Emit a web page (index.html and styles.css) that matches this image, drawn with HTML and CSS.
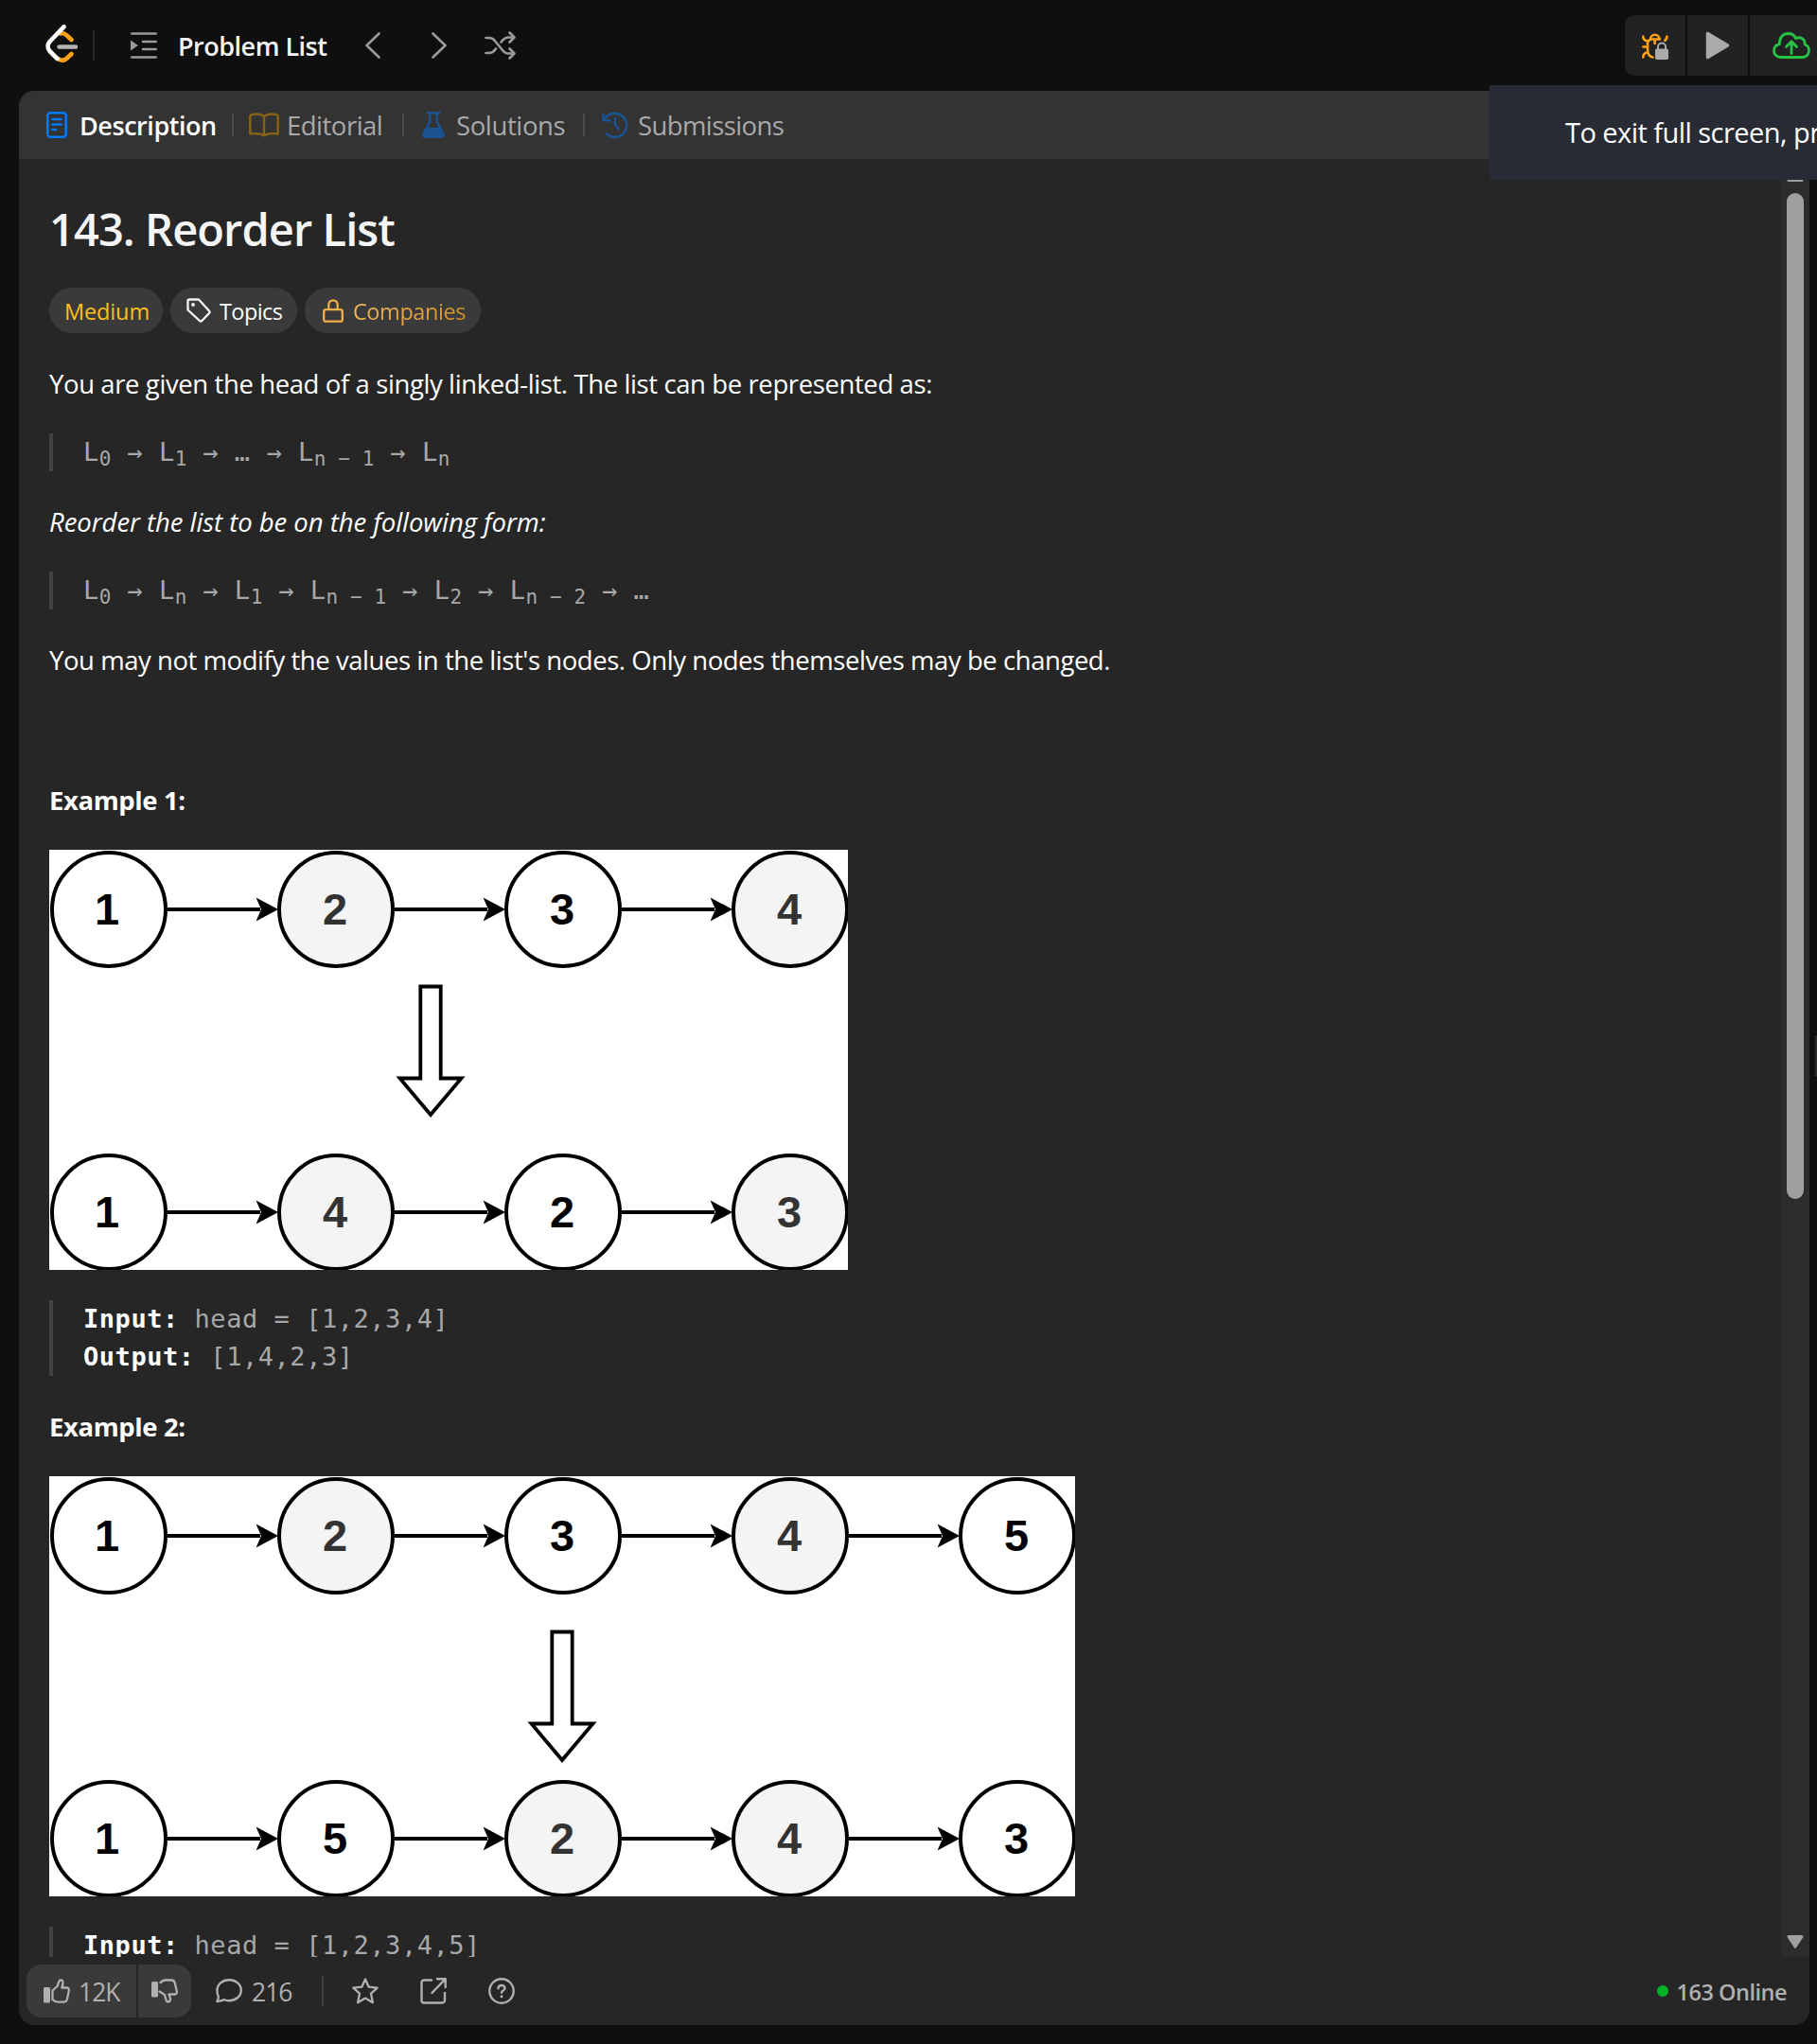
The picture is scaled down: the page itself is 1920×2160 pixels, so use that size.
FILE: index.html
```html
<!DOCTYPE html>
<html lang="en">
<head>
<meta charset="utf-8">
<title>143. Reorder List</title>
<link rel="stylesheet" href="styles.css">
</head>
<body>
<svg class="defs" width="0" height="0">
  <defs>
    <g id="link"><path d="M0 0H98" stroke="#000" stroke-width="4"/><path d="M117 0L93.500 -12.500L99 0L93.500 12.500Z" fill="#000"/></g>
    <path id="down" d="M-10.700 0H10.700V97H32.500L0 135.500L-32.500 97H-10.700Z" fill="#fff" stroke="#000" stroke-width="3.800"/>
  </defs>
</svg>
<header class="topbar">
  <svg class="logo" width="34" height="40" viewBox="0 0 34 40" fill="none" stroke-width="4.600" stroke-linecap="round" stroke-linejoin="round"><path d="M16 9.500c3-.8 5 .3 6.500 1.800l5 4.700M14 36.300c3 2 6 1.700 8.500-.6l5-4.700" stroke="#ffa116"/><path d="M14.500 23.500H32" stroke="#b3b3b3"/><path d="M19.500 2.300L4.500 18c-2.500 3-2.500 7 0 10l8 8" stroke="#fff"/></svg>
  <span class="rule"></span>
  <svg class="list-icon" width="28" height="28" viewBox="0 0 28 28" fill="none" stroke="#9a9a9a" stroke-width="2.600" stroke-linecap="round"><path d="M1.300 1.500H26.700M13 10H26.700M13 18H26.700M1.300 26.500H26.700"/><path d="M0 8.500v11L8 14z" fill="#9a9a9a" stroke="none"/></svg>
  <span class="list-label"><b class="label t-list">Problem List</b></span>
  <svg class="prev" width="16" height="28" viewBox="0 0 16 28" fill="none" stroke="#9a9a9a" stroke-width="2.600" stroke-linecap="round" stroke-linejoin="round"><path d="M14.500 1.500L1.500 14l13 12.500"/></svg>
  <svg class="next" width="16" height="28" viewBox="0 0 16 28" fill="none" stroke="#9a9a9a" stroke-width="2.600" stroke-linecap="round" stroke-linejoin="round"><path d="M1.500 1.500L14.500 14l-13 12.500"/></svg>
  <svg class="shuffle" width="33" height="30" viewBox="0 0 33 30" fill="none" stroke="#9a9a9a" stroke-width="2.600" stroke-linecap="round" stroke-linejoin="round"><path d="M1.500 7H5c3 0 4.500 1 6.200 3.500L19 20c2 2.500 3.500 3.500 6 3.500h6M1.500 23H5c3 0 4.500-1 6.200-3.500l.8-1M17.500 11.500l1.500-1.800C21 7.500 22.500 6.500 25 6.500h6M26.500 1.500l5 5-5 5M26.500 18.500l5 5-5 5"/></svg>
  <div class="actions">
    <span class="action"><svg width="28" height="29" viewBox="0 0 28 29" fill="none"><g stroke="#ffa116" stroke-width="2.600" stroke-linecap="round" stroke-linejoin="round"><path d="M9 7.500a4.700 4.700 0 0 1 9.400 0zM1.300 4.500c0 3 2 4.500 5 5M26.500 4.500c0 2-.6 3.200-2.300 4.300M1.300 15.500H6M1.300 26.500c0-3.500 1.500-4.800 5-5.500M6 12v6c0 5 2 8 5.500 8.500M13.600 8v4M6 11c1-2.500 2-3.500 4-3.500h9"/></g><path d="M17 18v-2.500a4 4 0 0 1 8 0V18" stroke="#aaa" stroke-width="2"/><rect x="14" y="17.500" width="14" height="11.500" rx="1.800" fill="#aaa"/></svg></span>
    <span class="action"><svg width="26" height="30" viewBox="0 0 26 30"><path d="M2.500 2.500v25L23.500 15z" fill="#aaa" stroke="#aaa" stroke-width="3.500" stroke-linejoin="round"/></svg></span>
    <span class="action submit"><svg width="40" height="28" viewBox="0 0 40 28" fill="none" stroke="#28c244" stroke-width="2.800" stroke-linecap="round" stroke-linejoin="round"><path d="M8.500 26.500C4 26.500 1.500 23 1.500 19.500c0-3.500 2.300-6 5.800-6.800C7.300 5.500 11 1.500 16.500 1.500c4 0 6.800 2 8 5C30 4.300 34.700 7.500 34.200 13c2.800 1 4.300 3.500 4.300 6.300 0 4-3 7.200-7.200 7.200zM20 22.500V10M14.500 15.500L20 9.800l5.500 5.700"/></svg></span>
  </div>
</header>

<main class="panel">
  <nav class="tabs">
    <div class="tab tab-desc active"><svg width="22" height="28" viewBox="0 0 22 28" fill="none" stroke="#007aff" stroke-width="2.600" stroke-linecap="round"><rect x="1.300" y="1.300" width="19.400" height="25.400" rx="3"/><path d="M6.500 8H15.500M6.500 13.500H15.500M6.500 19H10"/></svg><b class="label t-desc">Description</b></div>
    <div class="tab tab-edit"><svg width="32" height="26" viewBox="0 0 32 26" fill="none" stroke="#876414" stroke-width="2.400" stroke-linejoin="round"><path d="M16 4C13 1.500 7 1.300 3 2.200c-1 .2-1.700.8-1.700 2V22.500c5-.6 11-.6 14.700 1.800 3.700-2.400 9.700-2.400 14.700-1.800V4.200c0-1.200-.7-1.800-1.700-2C25 1.300 19 1.500 16 4zM16 4v20"/></svg><span class="label t-edit">Editorial</span></div>
    <div class="tab tab-sol"><svg width="24" height="28" viewBox="0 0 24 28"><path d="M6 0h12a1 1 0 0 1 0 2.500h-1V10l6.500 13c1 2.500 0 5-3 5h-17c-3 0-4-2.500-3-5L7 10V2.500H6A1 1 0 0 1 6 0zM9.500 2.500v8.200L6.500 17h11l-3-6.300V2.500z" fill="#1b5290" fill-rule="evenodd"/></svg><span class="label t-sol">Solutions</span></div>
    <div class="tab tab-sub"><svg width="28" height="28" viewBox="0 0 28 28" fill="none" stroke="#1b5290" stroke-width="2.600" stroke-linecap="round" stroke-linejoin="round"><path d="M1.500 2.500v6.800h6.800M2.200 9A12.600 12.600 0 1 1 5 23.500M14 7.500V14l4 4.500"/></svg><span class="label t-sub">Submissions</span></div>
  </nav>

  <div class="scroller">
    <article class="content">
      <h1>143. Reorder List</h1>
      <div class="chips">
        <span class="chip medium"><span class="label">Medium</span></span>
        <span class="chip topics"><svg width="26" height="26" viewBox="0 0 26 26" fill="none" stroke="#f5f5f5" stroke-width="2.300" stroke-linejoin="round"><path d="M1.500 3v9.500L14 24c.8.700 1.500.700 2.300 0L24 16c.8-.8.800-1.600 0-2.400L13 1.500H3C2 1.500 1.500 2 1.500 3z"/><circle cx="7" cy="7" r="1.900" fill="#f5f5f5" stroke="none"/></svg><span class="label">Topics</span></span>
        <span class="chip companies"><svg width="22" height="25" viewBox="0 0 22 25" fill="none" stroke="#efb04a" stroke-width="2.300" stroke-linejoin="round"><rect x="1.200" y="11.200" width="19.600" height="12.500" rx="2"/><path d="M6.300 11V6a4.700 4.700 0 0 1 9.400 0v5"/></svg><span class="label">Companies</span></span>
      </div>
      <p class="intro">You are given the head of a singly linked-list. The list can be represented as:</p>
      <pre>L<sub>0</sub> → L<sub>1</sub> → … → L<sub>n − 1</sub> → L<sub>n</sub></pre>
      <p><em>Reorder the list to be on the following form:</em></p>
      <pre>L<sub>0</sub> → L<sub>n</sub> → L<sub>1</sub> → L<sub>n − 1</sub> → L<sub>2</sub> → L<sub>n − 2</sub> → …</pre>
      <p class="note">You may not modify the values in the list's nodes. Only nodes themselves may be changed.</p>
      <p class="blank">&nbsp;</p>
      <p><strong>Example 1:</strong></p>
      <svg class="figure" width="844" height="444" viewBox="0 0 844 444">
        <rect width="844" height="444" fill="#fff"/>
        <g class="node"><circle cx="63" cy="63" r="60"/><circle class="alt" cx="303" cy="63" r="60"/><circle cx="543" cy="63" r="60"/><circle class="alt" cx="783" cy="63" r="60"/><circle cx="63" cy="383" r="60"/><circle class="alt" cx="303" cy="383" r="60"/><circle cx="543" cy="383" r="60"/><circle class="alt" cx="783" cy="383" r="60"/></g>
        <use href="#link" x="125" y="63"/><use href="#link" x="365" y="63"/><use href="#link" x="605" y="63"/>
        <use href="#link" x="125" y="383"/><use href="#link" x="365" y="383"/><use href="#link" x="605" y="383"/>
        <use href="#down" x="403" y="144.500"/>
        <g class="num"><text x="61" y="79">1</text><text class="soft" x="302" y="79">2</text><text x="542" y="79">3</text><text class="soft" x="782" y="79">4</text><text x="61" y="399">1</text><text class="soft" x="302" y="399">4</text><text x="542" y="399">2</text><text class="soft" x="782" y="399">3</text></g>
      </svg>
      <pre><b>Input:</b> head = [1,2,3,4]
<b>Output:</b> [1,4,2,3]</pre>
      <p><strong>Example 2:</strong></p>
      <svg class="figure" width="1084" height="444" viewBox="0 0 1084 444">
        <rect width="1084" height="444" fill="#fff"/>
        <g class="node"><circle cx="63" cy="63" r="60"/><circle class="alt" cx="303" cy="63" r="60"/><circle cx="543" cy="63" r="60"/><circle class="alt" cx="783" cy="63" r="60"/><circle cx="1023" cy="63" r="60"/><circle cx="63" cy="383" r="60"/><circle cx="303" cy="383" r="60"/><circle class="alt" cx="543" cy="383" r="60"/><circle class="alt" cx="783" cy="383" r="60"/><circle cx="1023" cy="383" r="60"/></g>
        <use href="#link" x="125" y="63"/><use href="#link" x="365" y="63"/><use href="#link" x="605" y="63"/><use href="#link" x="845" y="63"/>
        <use href="#link" x="125" y="383"/><use href="#link" x="365" y="383"/><use href="#link" x="605" y="383"/><use href="#link" x="845" y="383"/>
        <use href="#down" x="542" y="164.500"/>
        <g class="num"><text x="61" y="79">1</text><text class="soft" x="302" y="79">2</text><text x="542" y="79">3</text><text class="soft" x="782" y="79">4</text><text x="1022" y="79">5</text><text x="61" y="399">1</text><text x="302" y="399">5</text><text class="soft" x="542" y="399">2</text><text class="soft" x="782" y="399">4</text><text x="1022" y="399">3</text></g>
      </svg>
      <pre><b>Input:</b> head = [1,2,3,4,5]</pre>
    </article>
    <div class="scrollbar">
      <svg width="18" height="14" viewBox="0 0 18 14"><path d="M2 12.500L9 2l7 10.500z" fill="#9f9f9f" stroke="#9f9f9f" stroke-width="3" stroke-linejoin="round"/></svg>
      <span class="thumb"></span>
      <svg width="18" height="14" viewBox="0 0 18 14"><path d="M2 1.500h14L9 12.300z" fill="#9f9f9f" stroke="#9f9f9f" stroke-width="3" stroke-linejoin="round"/></svg>
    </div>
  </div>

  <footer class="footer">
    <div class="votes">
      <span class="vote up"><svg width="28" height="26" viewBox="0 0 28 26"><rect x="0" y="9" width="7" height="16.500" rx="1.500" fill="#b0b0b0"/><path d="M9.500 12.500l5-4.500 2-5.500c1-2 4-1.300 4 1.500 0 2.300-.8 4-1.200 5.500h5.200c2 0 2.800 1.700 2.300 3.500l-2 9c-.5 1.800-1.500 2.700-3.500 2.700h-6c-2.600 0-4-1.200-5.800-2.700z" fill="none" stroke="#b0b0b0" stroke-width="2.300" stroke-linejoin="round"/></svg><b class="label t-count">12K</b></span>
      <span class="vote"><svg width="28" height="26" viewBox="0 0 28 26"><rect x="0" y="3" width="7" height="16.500" rx="1.500" fill="#b0b0b0"/><path d="M8.500 13.500l5.500 3.500 1.700 6c1 2.500 4.300 1.800 4.300-1.200 0-2.200-.8-3.800-1.500-5.300h6c2 0 2.800-1.600 2.300-3.400l-2.200-9c-.5-1.800-1.500-2.600-3.500-2.600h-6.300c-2.600 0-3.300 1-5.300 2.500" fill="none" stroke="#b0b0b0" stroke-width="2.300" stroke-linejoin="round" stroke-linecap="round"/></svg></span>
    </div>
    <svg class="comment" width="28" height="26" viewBox="0 0 28 26" fill="none" stroke="#b0b0b0" stroke-width="2.400" stroke-linejoin="round"><path d="M14.200 1.200c7 0 12.600 4.800 12.600 11s-5.600 11-12.600 11c-2 0-3.800-.3-5.200-1-2.200 1-4.500 1.700-7.700 1.800 1-1.800 1.800-3.300 1.500-5.200C1.800 17 1.400 14.700 1.400 12.200c0-6.200 5.800-11 12.800-11z"/></svg>
    <b class="count label t-count">216</b>
    <span class="rule frule"></span>
    <svg class="fi" width="28" height="28" viewBox="0 0 28 28" fill="none" stroke="#b0b0b0" stroke-width="2.300" stroke-linejoin="round"><path d="M14 1.500l3.700 8.200 9 .9-6.700 6 1.900 9.600L14 21.600l-7.900 4.600L8 16.600l-6.700-6 9-.9z"/></svg>
    <svg class="fi" width="28" height="28" viewBox="0 0 28 28" fill="none" stroke="#b0b0b0" stroke-width="2.400" stroke-linecap="round" stroke-linejoin="round"><path d="M12 2.500H4A2.500 2.500 0 0 0 1.500 5v19A2.500 2.500 0 0 0 4 26.500h19.500A2.500 2.500 0 0 0 26 24v-8M18 1.300h8.700V10M26.300 1.700L12.500 16"/></svg>
    <svg class="fi" width="28" height="28" viewBox="0 0 28 28" fill="none" stroke="#b0b0b0" stroke-width="2.400" stroke-linecap="round" stroke-linejoin="round"><circle cx="14" cy="14" r="12.700"/><path d="M10.500 11.300c0-4.600 7-4.300 7-.3 0 2.500-3.500 2.500-3.500 4.800"/><circle cx="14" cy="19.800" r="1.500" fill="#b0b0b0" stroke="none"/></svg>
    <span class="online"><i></i><b class="label">163 Online</b></span>
  </footer>
</main>
<span class="splitter"></span>
<div class="toast">To exit full screen, press</div>
</body>
</html>
```
FILE: styles.css
```css
* { box-sizing: border-box; }

body {
  position: relative;
  width: 1920px;
  height: 2160px;
  margin: 0;
  overflow: hidden;
  background: #0f0f0f;
  color: #fff;
  font: 27.500px/40px "Open Sans", "Noto Sans", sans-serif;
  white-space: nowrap;
}

svg { display: block; flex: none; }
.defs { position: absolute; }
b { font-weight: 600; }

/* labels sit a touch below the optical middle of their icons */
.label { display: block; padding-top: 2px; }

.topbar { display: flex; align-items: center; height: 96px; padding-left: 48px; }
.logo { margin-top: -4px; }
.rule { flex: none; width: 2px; height: 32px; background: #262626; }
.topbar .rule { margin: 0 38px 0 16px; }
.list-icon { margin-right: 22px; }
.list-label { width: 198px; color: #f5f5f5; }
.t-list { font-size: 27px; letter-spacing: -.5px; }
.prev { margin-right: 54px; }
.next { margin-right: 40px; }
.actions { display: flex; gap: 2px; margin-left: auto; overflow: hidden; border-radius: 10px 0 0 10px; }
.action { display: flex; align-items: center; justify-content: center; width: 64px; height: 64px; background: #222; }
.submit { justify-content: flex-start; width: 71px; padding-left: 24px; }

.panel { display: flex; flex-direction: column; width: 1892px; height: 2044px; margin-left: 20px; overflow: hidden; border-radius: 16px; background: #262626; }
.tabs { display: flex; flex: none; height: 72px; background: #333; }
.tab { position: relative; display: flex; align-items: center; height: 72px; color: #a9a9a9; }
.tab + .tab::before { position: absolute; left: 0; width: 2px; height: 24px; background: #4a4a4a; content: ""; }
.tab-desc { width: 225px; padding-left: 29px; gap: 13px; color: #fff; }
.tab-edit { width: 180px; padding-left: 18px; gap: 8px; }
.tab-sol { width: 191px; padding-left: 21px; gap: 12px; }
.tab-sub { padding-left: 20px; gap: 10px; }
.t-desc { font-size: 27px; letter-spacing: -.45px; }
.t-edit { letter-spacing: -.5px; }
.t-sol { letter-spacing: -.38px; }
.t-sub { letter-spacing: -.6px; }

.scroller { display: flex; justify-content: space-between; height: 1900px; overflow: hidden; }
.content { padding: 42px 0 0 32px; }
h1 { margin: 0; font-size: 47px; font-weight: 600; line-height: 64px; letter-spacing: -.93px; color: #f5f5f5; }
.chips { display: flex; gap: 8px; margin: 30px 0 33px; }
.chip { display: flex; align-items: center; height: 48px; border-radius: 24px; background: #3a3a3a; font-size: 23.500px; }
.medium { width: 120px; padding-left: 16px; letter-spacing: -.13px; color: #ffc01e; }
.topics { width: 134px; padding-left: 17px; gap: 9px; letter-spacing: -.6px; }
.companies { width: 186px; padding-left: 19px; gap: 10px; letter-spacing: -.43px; }
.companies .label { background: linear-gradient(90deg, #efb65c, #d69325); background-clip: text; color: transparent; }
p { height: 40px; margin: 0 0 33px; line-height: 42px; }
.intro { letter-spacing: -.396px; }
.note { letter-spacing: -.446px; }
.blank { margin-bottom: 35px; }
em { letter-spacing: -.05px; }
strong { font-weight: 700; letter-spacing: -.4px; }
pre { min-height: 40px; margin: 0 0 33px; padding-left: 32px; border-left: 4px solid #424242; color: #a8a8a8; font: 27px/40px "DejaVu Sans Mono", monospace; letter-spacing: .54px; }
pre b { color: #fff; font-weight: 700; }
sub { font-size: 21px; line-height: 0; letter-spacing: .1px; vertical-align: -5px; }
.figure { margin-bottom: 32px; }
.node { fill: #fff; stroke: #000; stroke-width: 4; }
.node .alt { fill: #f4f4f4; }
.num { fill: #000; font: bold 47px "Liberation Sans", Arial, sans-serif; text-anchor: middle; }
.num .soft { fill: #333; }

.scrollbar { display: flex; flex-direction: column; align-items: center; width: 30px; padding: 10px 0 9px; background: #2c2c2c; }
.thumb { width: 18px; height: 1063px; margin: 12px 0 auto; border-radius: 9px; background: #9f9f9f; }

.footer { display: flex; align-items: center; height: 72px; padding: 0 24px 0 8px; color: #b0b0b0; }
.votes { display: flex; gap: 2px; overflow: hidden; border-radius: 16px; }
.vote { display: flex; align-items: center; width: 56px; height: 56px; padding-left: 14px; background: #3a3a3a; }
.vote.up { width: 116px; padding-left: 18px; gap: 9px; }
.t-count { font-size: 26.500px; font-weight: 500; letter-spacing: -1px; }
.comment { margin: 0 10px 0 26px; }
.count { width: 74px; }
.frule { margin-right: 30px; background: #424242; }
.fi { margin-right: 44px; }
.fi:nth-last-child(2) { margin-right: 0; }
.online { display: flex; align-items: center; gap: 9px; margin-left: auto; font-size: 23.500px; letter-spacing: -.5px; }
.online i { width: 12px; height: 12px; border-radius: 50%; background: #02b128; }

.splitter { position: absolute; left: 1918px; top: 1095px; width: 2px; height: 42px; background: #2c2c2c; }
.toast { position: absolute; left: 1574px; top: 90px; width: 346px; height: 100px; padding-left: 80px; overflow: hidden; background: #282b33; font-size: 29px; line-height: 99px; letter-spacing: -.537px; }
```
